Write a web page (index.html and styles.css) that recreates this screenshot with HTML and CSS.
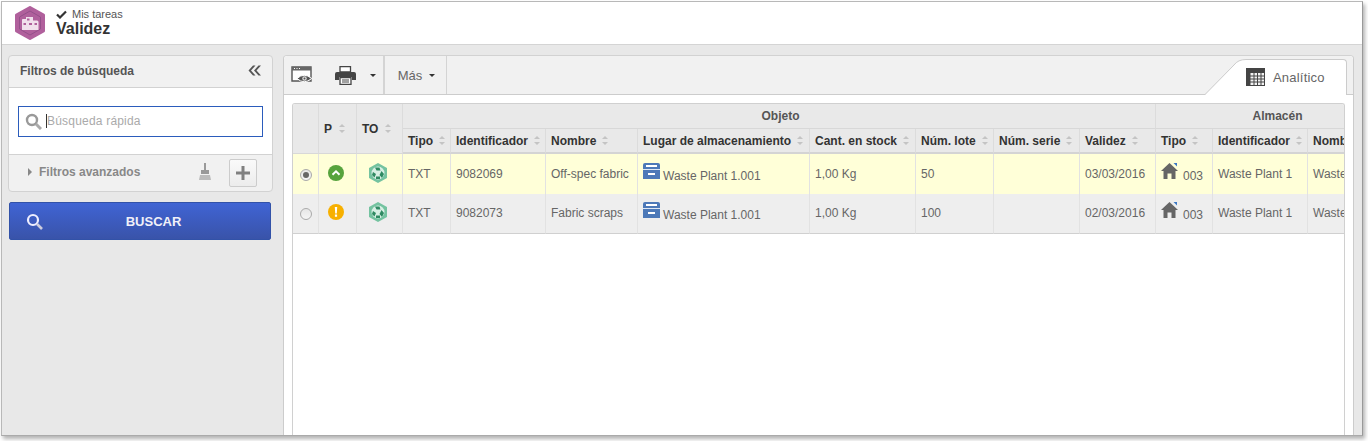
FILE: index.html
```html
<!DOCTYPE html>
<html lang="es">
<head>
<meta charset="utf-8">
<title>Validez</title>
<link rel="stylesheet" href="styles.css">
</head>
<body>
<div class="window">
  <header class="top">
    <svg class="logo" width="32" height="34" viewBox="0 0 32 34">
      <path d="M16 1.500 L29.500 9 V25 L16 32.500 L2.500 25 V9 Z" fill="#b0609c" stroke="#b0609c" stroke-width="3" stroke-linejoin="round"/>
      <path d="M16 5 L26.500 11 V23 L16 29 L5.500 23 V11 Z" fill="none" stroke="#94508a" stroke-width="1"/>
      <path d="M8 14 Q8 12.500 9.500 13 H12 V11 H19 V14.500 H23 Q24.500 14.500 24.500 16 V24 H8 Z" fill="#f1e0ec"/>
      <path d="M13 12.500 H15.500 V14.500 H13 Z M9.500 17 H12 V19 H9.500 Z M15 17 H18 V19 H15 Z M20.500 17 H23 V19 H20.500 Z" fill="#b0609c"/>
    </svg>
    <div class="titles">
      <div class="crumb"><svg class="check" width="11" height="9" viewBox="0 0 11 9"><path d="M1 4.500 L4 7.500 L10 1.500" fill="none" stroke="#333" stroke-width="2.200"/></svg>Mis tareas</div>
      <div class="title">Validez</div>
    </div>
  </header>
  <div class="main">
    <aside class="side">
      <section class="card">
        <div class="card-head">
          <span>Filtros de búsqueda</span>
          <svg width="14" height="11" viewBox="0 0 14 11"><path d="M6 0.500 L1.500 5.500 L6 10.500 H8.500 L4 5.500 L8.500 0.500 Z M11.500 0.500 L7 5.500 L11.500 10.500 H14 L9.500 5.500 L14 0.500 Z" fill="#555"/></svg>
        </div>
        <div class="card-body">
          <div class="search">
            <svg width="17" height="17" viewBox="0 0 17 17"><circle cx="7" cy="7" r="5" fill="#fff" stroke="#999" stroke-width="2.400"/><path d="M11 11 L16 16" stroke="#aaa" stroke-width="3"/></svg>
            <span class="caret"></span><span class="ph">Búsqueda rápida</span>
          </div>
        </div>
        <div class="card-foot">
          <span class="tri"></span><span class="adv">Filtros avanzados</span>
          <svg class="broom" width="12" height="18" viewBox="0 0 12 18"><path d="M5 0 H7 V7 H10 V11 H2 V7 H5 Z" fill="#999"/><path d="M1 12 H11 L12 17 H0 Z" fill="#bbb"/></svg>
          <button class="plus" type="button"><svg width="14" height="14" viewBox="0 0 14 14"><path d="M5.500 0 H8.500 V5.500 H14 V8.500 H8.500 V14 H5.500 V8.500 H0 V5.500 H5.500 Z" fill="#808080"/></svg></button>
        </div>
      </section>
      <button class="buscar" type="button">
        <svg width="17" height="17" viewBox="0 0 17 17"><circle cx="7" cy="7" r="5" fill="none" stroke="#eef" stroke-width="2.200"/><path d="M11 11 L16 16" stroke="#ccd" stroke-width="2.600"/></svg>
        <span>BUSCAR</span>
      </button>
    </aside>
    <main class="content">
      <div class="toolbar">
        <div class="tools">
          <div class="tool tool-view">
            <svg width="21" height="18" viewBox="0 0 21 18"><path d="M1 1 H20 V15 H1 Z" fill="#fff" stroke="#555" stroke-width="1.400"/><path d="M1 1 H20 V4.500 H1 Z" fill="#666"/><path d="M3 2.500 H4 M5.500 2.500 H6.500 M8 2.500 H9" stroke="#fff"/><path d="M6 12.500 Q13 6 20.800 12.500 Q13 19 6 12.500 Z" fill="#555" stroke="#fff" stroke-width="1"/><circle cx="13.500" cy="12.500" r="2.200" fill="#ddd"/><circle cx="13.500" cy="12.500" r="1" fill="#555"/></svg>
          </div>
          <div class="tool tool-print">
            <svg width="21" height="19" viewBox="0 0 21 19"><path d="M5 0.700 H15.500 V6 H5 Z" fill="#fff" stroke="#444" stroke-width="1.300"/><path d="M2 6 H19 Q21 6 21 8 V14 H17 V11 H4 V14 H0 V8 Q0 6 2 6 Z" fill="#444"/><path d="M5 11.700 H16 V18.300 H5 Z" fill="#fff" stroke="#444" stroke-width="1.300"/><path d="M7 14 H14 M7 16 H14" stroke="#444"/></svg>
            <span class="drop"></span>
          </div>
          <div class="tool tool-more">Más<span class="drop"></span></div>
        </div>
        <div class="tab">
          <svg class="tab-shape" width="41" height="36" viewBox="0 0 41 36"><path d="M0 36 L29 6 Q33 0.500 41 0.500 V36 Z" fill="#fff"/><path d="M0 35.500 L29 6 Q33 0.500 41 0.500" fill="none" stroke="#ccc"/></svg>
          <div class="tab-face">
            <svg width="19" height="18" viewBox="0 0 19 18"><rect width="19" height="18" fill="#444"/><path d="M4.500 5 H18 V17 H4.500 Z" fill="#f2f2f2"/><path d="M4 8 H19 M4 11 H19 M4 14 H19 M8 4 V18 M11.500 4 V18 M15 4 V18" stroke="#444" stroke-width="1"/></svg>
            <span>Analítico</span>
          </div>
        </div>
      </div>
      <div class="grid-wrap">
        <div class="grid">
          <table>
            <colgroup>
              <col class="c26"><col class="c38"><col class="c46"><col class="c48"><col class="c95"><col class="c92"><col class="c172"><col class="c106"><col class="c78"><col class="c86"><col class="c76"><col class="c57"><col class="c95"><col class="c91">
            </colgroup>
            <thead>
              <tr class="h1">
                <th rowspan="2"></th>
                <th rowspan="2" class="bold"><span class="sl">P<i class="sort"></i></span></th>
                <th rowspan="2" class="bold"><span class="sl">TO<i class="sort"></i></span></th>
                <th colspan="8" class="group">Objeto</th>
                <th colspan="3" class="group group-right">Almacén</th>
              </tr>
              <tr class="h2">
                <th><span class="sl">Tipo<i class="sort"></i></span></th>
                <th><span class="sl">Identificador<i class="sort"></i></span></th>
                <th><span class="sl">Nombre<i class="sort"></i></span></th>
                <th><span class="sl">Lugar de almacenamiento<i class="sort"></i></span></th>
                <th><span class="sl">Cant. en stock<i class="sort"></i></span></th>
                <th><span class="sl">Núm. lote<i class="sort"></i></span></th>
                <th><span class="sl">Núm. serie<i class="sort"></i></span></th>
                <th><span class="sl">Validez<i class="sort"></i></span></th>
                <th><span class="sl">Tipo<i class="sort"></i></span></th>
                <th><span class="sl">Identificador<i class="sort"></i></span></th>
                <th><span class="sl">Nombre<i class="sort"></i></span></th>
              </tr>
            </thead>
            <tbody>
              <tr class="sel">
                <td class="ctr"><span class="radio on"></span></td>
                <td class="ctr"><svg class="st" width="16" height="16" viewBox="0 0 16 16"><circle cx="8" cy="8" r="8" fill="#57a33d"/><path d="M4.500 9.800 L8 6.300 L11.500 9.800" fill="none" stroke="#fff" stroke-width="2"/></svg></td>
                <td class="ctr"><svg class="hex" width="18" height="20" viewBox="0 0 18 20"><path d="M9 0 L18 5 V15 L9 20 L0 15 V5 Z" fill="#74c3a0"/><circle cx="9" cy="10" r="6.500" fill="#d8efe4"/><path d="M6 4.500 H10.500 L11.500 7.500 H7.500 Z M12.500 8 L15 11 L13 15 L10.500 12 Z M4 9 L7 11 L5.500 14.500 L3 12 Z M7 13.500 H11 V16 H7 Z" fill="#2f8a62"/></svg></td>
                <td>TXT</td><td>9082069</td><td>Off-spec fabric</td>
                <td><svg class="box" width="17" height="16" viewBox="0 0 17 16"><path d="M2 0 H15 Q17 0 17 2 V16 H0 V2 Q0 0 2 0 Z" fill="#4d79b8"/><path d="M3 2 H14 V4 H3 Z" fill="#fff"/><path d="M0 6.500 H17" stroke="#dfe8f4"/><path d="M5 10 H12 V12 H5 Z" fill="#fff"/></svg><span class="low">Waste Plant 1.001</span></td>
                <td>1,00 Kg</td><td>50</td><td></td><td>03/03/2016</td>
                <td><svg class="house" width="17" height="16" viewBox="0 0 17 16"><path d="M8.500 0 L17 8 H14.500 V16 H10.500 V10.500 H6.500 V16 H2.500 V8 H0 Z" fill="#666"/><path d="M12.500 0 H16 V3.500 Z" fill="#3b78c4"/></svg><span class="low">003</span></td>
                <td>Waste Plant 1</td><td>Waste Plant 1</td>
              </tr>
              <tr class="alt">
                <td class="ctr"><span class="radio"></span></td>
                <td class="ctr"><svg class="st" width="16" height="16" viewBox="0 0 16 16"><circle cx="8" cy="8" r="8" fill="#f7b000"/><path d="M6.800 3 H9.200 L8.800 9.500 H7.200 Z M6.900 10.500 H9.100 V12.800 H6.900 Z" fill="#fff"/></svg></td>
                <td class="ctr"><svg class="hex" width="18" height="20" viewBox="0 0 18 20"><path d="M9 0 L18 5 V15 L9 20 L0 15 V5 Z" fill="#74c3a0"/><circle cx="9" cy="10" r="6.500" fill="#d8efe4"/><path d="M6 4.500 H10.500 L11.500 7.500 H7.500 Z M12.500 8 L15 11 L13 15 L10.500 12 Z M4 9 L7 11 L5.500 14.500 L3 12 Z M7 13.500 H11 V16 H7 Z" fill="#2f8a62"/></svg></td>
                <td>TXT</td><td>9082073</td><td>Fabric scraps</td>
                <td><svg class="box" width="17" height="16" viewBox="0 0 17 16"><path d="M2 0 H15 Q17 0 17 2 V16 H0 V2 Q0 0 2 0 Z" fill="#4d79b8"/><path d="M3 2 H14 V4 H3 Z" fill="#fff"/><path d="M0 6.500 H17" stroke="#dfe8f4"/><path d="M5 10 H12 V12 H5 Z" fill="#fff"/></svg><span class="low">Waste Plant 1.001</span></td>
                <td>1,00 Kg</td><td>100</td><td></td><td>02/03/2016</td>
                <td><svg class="house" width="17" height="16" viewBox="0 0 17 16"><path d="M8.500 0 L17 8 H14.500 V16 H10.500 V10.500 H6.500 V16 H2.500 V8 H0 Z" fill="#666"/><path d="M12.500 0 H16 V3.500 Z" fill="#3b78c4"/></svg><span class="low">003</span></td>
                <td>Waste Plant 1</td><td>Waste Plant 1</td>
              </tr>
            </tbody>
          </table>
        </div>
      </div>
    </main>
  </div>
</div>
</body>
</html>
```
FILE: styles.css
```css
* { box-sizing: border-box; }
html, body { margin: 0; height: 100%; background: #fff; overflow: hidden; }
body { font-family: "Liberation Sans", Arial, sans-serif; font-size: 12px; color: #666; }

.window {
  width: 1362px; height: 435px; margin: 1px 0 0 1px;
  border: 1px solid #b8b8b8; border-bottom-color: #aaa; border-right-color: #999;
  box-shadow: 2px 3px 4px rgba(0,0,0,.3);
  display: flex; flex-direction: column; background: #e8e8e8; overflow: hidden;
}

.top { height: 43px; flex: none; background: #fff; border-bottom: 1px solid #d4d4d4; display: flex; align-items: flex-start; padding: 4px 0 0 12px; }
.logo { flex: none; }
.titles { margin-left: 10px; margin-top: 2px; }
.crumb { font-size: 11px; line-height: 12px; color: #555; display: flex; align-items: center; }
.check { margin-right: 5px; }
.title { font-size: 16px; line-height: 17px; font-weight: bold; color: #333; }

.main { flex: 1; display: flex; min-height: 0; }
.side { width: 281px; flex: none; padding: 10px 10px 0 6px; }

.card { height: 137px; border: 1px solid #d2d2d2; border-radius: 4px; background: #f1f1f1; display: flex; flex-direction: column; }
.card-head { height: 32px; flex: none; border-bottom: 1px solid #d2d2d2; display: flex; align-items: center; justify-content: space-between; padding: 0 11px 2px 11px; font-weight: bold; color: #555; }
.card-body { height: 67px; flex: none; background: #fff; border-bottom: 1px solid #d2d2d2; padding: 18px 9px 0 9px; }
.search { height: 31px; border: 1px solid #2b5cbc; background: #fff; display: flex; align-items: center; padding: 0 0 2px 6px; }
.search svg { position: relative; top: 1px; }
.caret { width: 1px; height: 14px; background: #333; margin-left: 4px; }
.ph { color: #aaa; letter-spacing: .2px; }
.card-foot { flex: 1; display: flex; align-items: center; padding: 0 15px 2px 19px; }
.tri { width: 0; height: 0; border-left: 4px solid #888; border-top: 4px solid transparent; border-bottom: 4px solid transparent; margin-right: 7px; }
.adv { font-weight: bold; color: #888; flex: 1; }
.broom { margin-right: 18px; }
.plus { width: 28px; height: 28px; padding: 0; border: 1px solid #ccc; border-radius: 2px; background: linear-gradient(#fafafa, #ececec); display: flex; align-items: center; justify-content: center; position: relative; top: 1px; }

.buscar { width: 262px; height: 38px; margin: 10px 0 0 1px; padding: 0 0 0 16px; display: flex; align-items: center; border: 1px solid #3252a8; border-radius: 2px; background: linear-gradient(#4064d4, #3953a9); color: #f0f0f8; font: bold 13px "Liberation Sans", Arial, sans-serif; }
.buscar span { flex: 1; text-align: center; padding-right: 6px; }

.content { flex: 1; min-width: 0; margin-top: 10px; margin-right: 8px; background: #fff; border-left: 1px solid #ccc; border-right: 1px solid #ccc; border-top: 1px solid #d2d2d2; border-radius: 4px 4px 0 0; display: flex; flex-direction: column; }
.toolbar { height: 39px; flex: none; background: #f1f1f1; display: flex; justify-content: space-between; border-bottom: 1px solid #ccc; border-radius: 4px 4px 0 0; }
.tools { display: flex; height: 38px; }
.tool { display: flex; align-items: center; border-right: 1px solid #d4d4d4; }
.tool-view { width: 40px; border-right: 0; padding-left: 7px; }
.tool-print { width: 61px; padding-left: 11px; border-right-width: 2px; justify-content: space-between; padding-right: 7px; }
.tool-more { width: 62px; justify-content: center; padding-left: 2px; font-size: 13px; color: #666; }
.drop { display: inline-block; width: 0; height: 0; border-top: 3px solid #333; border-left: 3px solid transparent; border-right: 3px solid transparent; }
.tool-more .drop { margin-left: 7px; }

.tab { display: flex; height: 36px; margin-top: 3px; margin-right: 6px; }
.tab-shape { flex: none; }
.tab-face { width: 101px; height: 36px; background: #fff; border-top: 1px solid #ccc; border-right: 1px solid #ccc; border-radius: 0 4px 0 0; display: flex; align-items: center; padding: 0 0 1px 0; font-size: 13px; color: #666; letter-spacing: .2px; }
.tab-face svg { margin-right: 8px; }

.grid-wrap { flex: 1; padding: 8px 8px 0 8px; min-height: 0; }
.grid { height: 100%; width: 1053px; border: 1px solid #d0d0d0; border-bottom: 0; border-radius: 3px 3px 0 0; overflow: hidden; }
table { border-collapse: separate; border-spacing: 0; table-layout: fixed; width: 1106px; }
.c26 { width: 26px; } .c38 { width: 38px; } .c46 { width: 46px; } .c48 { width: 48px; } .c95 { width: 95px; } .c92 { width: 92px; }
.c172 { width: 172px; } .c106 { width: 106px; } .c78 { width: 78px; } .c86 { width: 86px; } .c76 { width: 76px; } .c57 { width: 57px; } .c91 { width: 91px; }

th { background: #e9e9e9; color: #333; font-weight: bold; text-align: left; padding: 0 5px; white-space: nowrap; overflow: hidden; border-right: 1px solid #dcdcdc; border-bottom: 1px solid #d8d8d8; }
.h1 th { height: 25px; }
.h2 th { height: 25px; border-bottom: 2px solid #d4d4d4; }
th.group { text-align: center; font-weight: bold; color: #555; padding-left: 8px; }
th.group-right { border-right: 0; padding-left: 5px; }
.sl { display: inline-flex; align-items: center; }
.sort { display: inline-block; width: 7px; height: 9px; margin-left: 6px; position: relative; flex: none; }
.bold .sort { margin-left: 7px; }
.sort::before, .sort::after { content: ""; position: absolute; left: 0; width: 0; height: 0; border-left: 3.500px solid transparent; border-right: 3.500px solid transparent; }
.sort::before { top: 0; border-bottom: 3px solid #c4c4c4; }
.sort::after { bottom: 0; border-top: 3px solid #c4c4c4; }

td { height: 40px; padding: 0 5px; white-space: nowrap; overflow: hidden; color: #666; border-right: 1px solid #e2e2e2; vertical-align: middle; }
td.ctr { text-align: center; padding: 0; }
.sel td { background: #ffffd8; }
.alt td { background: #eeeeee; border-bottom: 1px solid #d0d0d0; padding-bottom: 1px; }
.radio { display: inline-block; width: 12px; height: 12px; border-radius: 50%; border: 1px solid #aaa; background: linear-gradient(#e6e6e6, #f5f5f5); vertical-align: middle; position: relative; }
.radio.on::after { content: ""; position: absolute; left: 2px; top: 2px; width: 6px; height: 6px; border-radius: 50%; background: #666; }
.st, .hex, .box, .house { vertical-align: middle; }
.st { margin-right: 3px; margin-top: -2px; }
.hex { margin-right: 3px; margin-top: -2px; }
.box, .house { margin-top: -7px; margin-right: 3px; }
.house { margin-right: 5px; }
.low { position: relative; top: 2px; }
```
